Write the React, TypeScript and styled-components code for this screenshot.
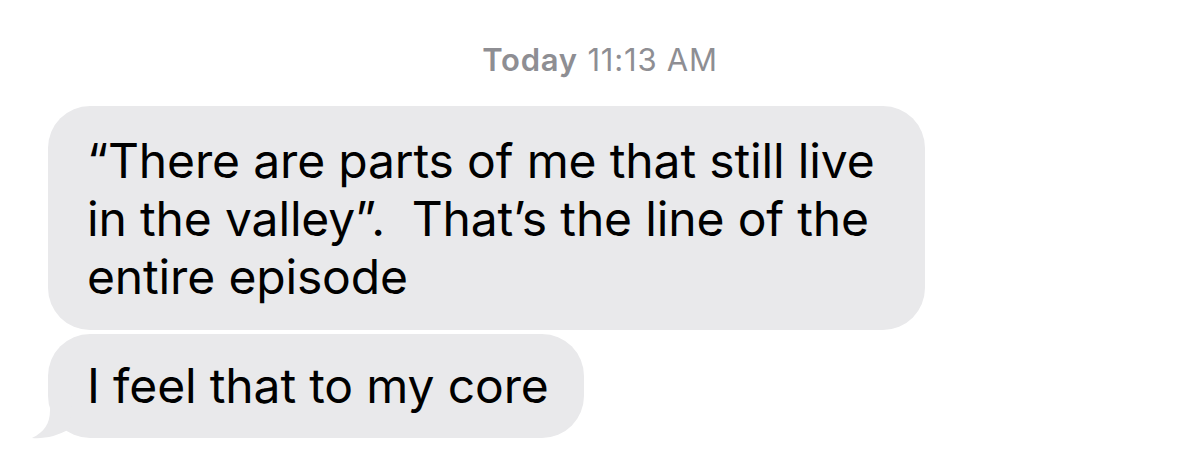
import React from "react";
import styled, { createGlobalStyle } from "styled-components";

const GlobalStyle = createGlobalStyle`
  html, body {
    margin: 0;
    padding: 0;
    background: #ffffff;
  }
  body {
    font-family: Inter, "Liberation Sans", Arial, sans-serif;
    -webkit-font-smoothing: antialiased;
  }
`;

const Thread = styled.div`
  width: 1200px;
  height: 467px;
  box-sizing: border-box;
  padding: 41px 0 0 48px;
  display: flex;
  flex-direction: column;
  align-items: flex-start;
  overflow: hidden;
  background: #ffffff;
`;

const Timestamp = styled.div`
  align-self: stretch;
  margin-left: -48px;
  text-align: center;
  font-size: 31px;
  line-height: 37px;
  letter-spacing: 0.8px;
  color: #8e8e93;
  margin-bottom: 28px;
`;

const Day = styled.span`
  font-weight: 600;
`;

const Group = styled.div`
  display: flex;
  flex-direction: column;
  align-items: flex-start;
  gap: 4px;
`;

const Bubble = styled.div<{ $padRight: number; $tail?: boolean }>`
  position: relative;
  box-sizing: border-box;
  background: #e9e9eb;
  color: #000000;
  border-radius: 42px;
  padding: ${(p) => (p.$tail ? "23px" : "26px")} ${(p) => p.$padRight}px
    ${(p) => (p.$tail ? "23px" : "24px")} 39px;
  font-size: 48px;
  line-height: 58px;
  letter-spacing: -0.15px;
  white-space: nowrap;
`;

const Tail = styled.svg`
  position: absolute;
  left: -16px;
  bottom: 0;
  width: 40px;
  height: 42px;
  overflow: visible;
`;

export default function App() {
  return (
    <>
      <GlobalStyle />
      <Thread>
        <Timestamp>
          <Day>Today</Day> 11:13 AM
        </Timestamp>
        <Group>
          <Bubble $padRight={51}>
            “There are parts of me that still live
            <br />
            in the valley”.&nbsp; That’s the line of the
            <br />
            entire episode
          </Bubble>
          <Bubble $padRight={35} $tail>
            I feel that to my core
            <Tail viewBox="0 0 40 42" aria-hidden="true">
              <path
                d="M18 0 L18 14 C18 28 12 36 0 42 C12 43 26 40 37 33 L40 0 Z"
                fill="#e9e9eb"
              />
            </Tail>
          </Bubble>
        </Group>
      </Thread>
    </>
  );
}
